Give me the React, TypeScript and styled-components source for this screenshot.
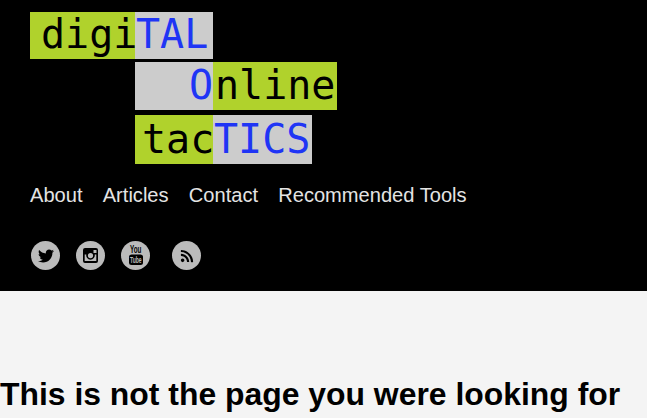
import React from 'react';
import styled, { createGlobalStyle } from 'styled-components';
import { FaTwitter, FaRss } from 'react-icons/fa';

const GlobalStyle = createGlobalStyle`
  html, body {
    margin: 0;
    padding: 0;
    background: #f4f4f4;
    overflow: hidden;
    font-family: "Liberation Sans", Arial, sans-serif;
  }
`;

const Header = styled.header`
  background: #000;
  height: 291px;
  box-sizing: border-box;
  padding: 12px 30px 0;
`;

const Logo = styled.div`
  display: grid;
  grid-template-columns: 105px 78px max-content;
  grid-template-rows: 47px 3px 48px 5px 49px;
  justify-content: start;
  font-family: "DejaVu Sans Mono", monospace;
  font-size: 40px;
`;

const Cell = styled.div<{
  $tone: 'green' | 'gray';
  $row: number;
  $col: number;
  $lead: number;
  $align?: string;
  $pad?: string;
}>`
  grid-row: ${(p) => p.$row};
  grid-column: ${(p) => p.$col};
  justify-self: ${(p) => (p.$col === 3 ? 'start' : 'stretch')};
  background: ${(p) => (p.$tone === 'green' ? '#b0d22c' : '#cccccc')};
  color: ${(p) => (p.$tone === 'green' ? '#000' : '#1f35f5')};
  line-height: ${(p) => p.$lead}px;
  text-align: ${(p) => p.$align || 'left'};
  padding: ${(p) => p.$pad || '0'};
  white-space: nowrap;
`;

const Nav = styled.nav`
  display: flex;
  gap: 20.2px;
  margin-top: 19px;
  font-size: 20.1px;
  line-height: 24px;
  color: #e4e4e4;
`;

const Socials = styled.div`
  display: flex;
  align-items: center;
  margin: 34px 0 0 1px;
`;

const Social = styled.a<{ $gap?: number }>`
  width: 29px;
  height: 29px;
  border-radius: 50%;
  background: #bbbbbb;
  color: #000;
  display: flex;
  align-items: center;
  justify-content: center;
  margin-right: ${(p) => p.$gap ?? 16}px;
`;

const Main = styled.main`
  padding-top: 85px;
`;

const Title = styled.h1`
  margin: 0;
  font-size: 31.9px;
  line-height: 36px;
  font-weight: 700;
  color: #000;
  white-space: nowrap;
`;

const InstagramIcon = () => (
  <svg width="15" height="15" viewBox="0 0 15 15">
    <path
      fillRule="evenodd"
      d="M2 0h11a2 2 0 0 1 2 2v11a2 2 0 0 1-2 2H2a2 2 0 0 1-2-2V2a2 2 0 0 1 2-2zm8.5 2v3h3V2h-3zM1.7 6.5V13h11.6V6.5h-1.6a4.3 4.3 0 1 1-8.4 0H1.7zM7.5 5a2.6 2.6 0 1 0 0 5.2 2.6 2.6 0 0 0 0-5.2z"
      fill="currentColor"
    />
  </svg>
);

const YoutubeIcon = () => (
  <svg width="24" height="27" viewBox="0 -3 24 27" fontFamily="Liberation Sans, sans-serif" fontWeight="700">
    <text transform="translate(6 8) scale(0.63 1)" fontSize="10" fill="#000">You</text>
    <rect x="5" y="9.5" width="14" height="10.5" rx="2.5" fill="#000" />
    <text transform="translate(6 18) scale(0.56 1)" fontSize="9" fill="#bbbbbb">Tube</text>
  </svg>
);

export default function App() {
  return (
    <>
      <GlobalStyle />
      <Header>
        <Logo>
          <Cell $tone="green" $row={1} $col={1} $lead={44} $pad="0 0 0 11px">digi</Cell>
          <Cell $tone="gray" $row={1} $col={2} $lead={44} $pad="0 0 0 1px">TAL</Cell>
          <Cell $tone="gray" $row={3} $col={2} $lead={47} $align="right">O</Cell>
          <Cell $tone="green" $row={3} $col={3} $lead={47} $pad="0 2px 0 2px">nline</Cell>
          <Cell $tone="green" $row={5} $col={2} $lead={48} $pad="0 0 0 7px">tac</Cell>
          <Cell $tone="gray" $row={5} $col={3} $lead={48} $pad="0 2px 0 1px">TICS</Cell>
        </Logo>
        <Nav>
          <span>About</span>
          <span>Articles</span>
          <span>Contact</span>
          <span>Recommended Tools</span>
        </Nav>
        <Socials>
          <Social><FaTwitter size={16} /></Social>
          <Social><InstagramIcon /></Social>
          <Social $gap={22}><YoutubeIcon /></Social>
          <Social><FaRss size={14} /></Social>
        </Socials>
      </Header>
      <Main>
        <Title>This is not the page you were looking for</Title>
      </Main>
    </>
  );
}
